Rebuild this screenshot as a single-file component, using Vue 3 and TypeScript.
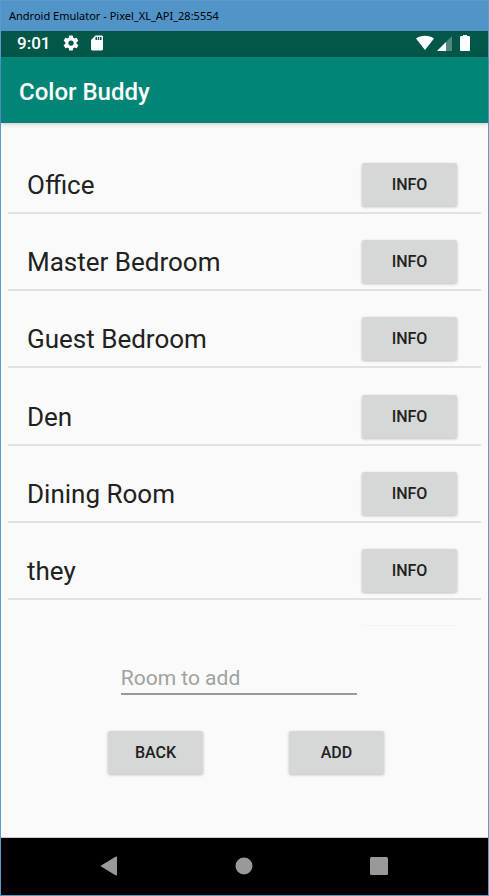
<script setup lang="ts">
import { ref } from 'vue'

interface Room {
  id: number
  name: string
}

const rooms = ref<Room[]>(
  ['Office', 'Master Bedroom', 'Guest Bedroom', 'Den', 'Dining Room', 'they'].map(
    (name, id) => ({ id, name }),
  ),
)
const newRoom = ref('')

function addRoom(): void {
  const name = newRoom.value.trim()
  if (!name) return
  rooms.value.push({ id: rooms.value.length, name })
  newRoom.value = ''
}
</script>

<template>
  <div class="window">
    <div class="titlebar">Android Emulator - Pixel_XL_API_28:5554</div>

    <div class="status">
      <div class="status-left">
        <span class="clock">9:01</span>
        <svg width="18" height="18" viewBox="0 0 24 24" aria-hidden="true">
          <path
            fill="#fff"
            d="M19.43 12.98c.04-.32.07-.64.07-.98s-.03-.66-.07-.98l2.11-1.65c.19-.15.24-.42.12-.64l-2-3.46c-.12-.22-.39-.3-.61-.22l-2.49 1c-.52-.4-1.08-.73-1.69-.98l-.38-2.65A.49.49 0 0 0 14 2h-4c-.25 0-.46.18-.49.42l-.38 2.65c-.61.25-1.17.59-1.69.98l-2.49-1c-.23-.09-.49 0-.61.22l-2 3.46c-.13.22-.07.49.12.64l2.11 1.65c-.04.32-.07.65-.07.98s.03.66.07.98l-2.11 1.65c-.19.15-.24.42-.12.64l2 3.46c.12.22.39.3.61.22l2.49-1c.52.4 1.08.73 1.69.98l.38 2.65c.03.24.24.42.49.42h4c.25 0 .46-.18.49-.42l.38-2.65c.61-.25 1.17-.59 1.69-.98l2.49 1c.23.09.49 0 .61-.22l2-3.46c.12-.22.07-.49-.12-.64l-2.11-1.65zM12 15.5a3.5 3.5 0 1 1 0-7 3.500 3.500 0 0 1 0 7z"
          />
        </svg>
        <svg width="18" height="18" viewBox="0 0 24 24" aria-hidden="true">
          <path
            fill="#fff"
            d="M18 2h-8L4 8v12c0 1.100.9 2 2 2h12c1.100 0 2-.9 2-2V4c0-1.100-.9-2-2-2zm-6 6h-2V4h2v4zm3 0h-2V4h2v4zm3 0h-2V4h2v4z"
          />
        </svg>
      </div>
      <div class="status-right">
        <svg width="18" height="16" viewBox="0 0 18 16" aria-hidden="true">
          <path fill="#fff" d="M0 3.500C5 -.3 13 -.3 18 3.500L9 15z" />
        </svg>
        <svg width="15" height="16" viewBox="0 0 15 16" aria-hidden="true">
          <path fill="#fff" fill-opacity=".3" d="M15 1v15H0z" />
          <path fill="#fff" d="M9 7v9H0z" />
        </svg>
        <svg class="battery" width="10" height="16" viewBox="0 0 10 16" aria-hidden="true">
          <path fill="#fff" d="M3 0h4v1h2q1 0 1 1v13q0 1-1 1H1q-1 0-1-1V2q0-1 1-1h2z" />
        </svg>
      </div>
    </div>

    <header class="appbar">
      <h1>Color Buddy</h1>
    </header>

    <main class="content">
      <ul class="rooms">
        <li v-for="room in rooms" :key="room.id" class="room">
          <span class="room-name">{{ room.name }}</span>
          <button type="button" class="btn">INFO</button>
        </li>
      </ul>
      <div class="next-edge"></div>

      <form class="entry" @submit.prevent="addRoom">
        <input
          v-model="newRoom"
          class="field"
          type="text"
          placeholder="Room to add"
          aria-label="Room to add"
        />
        <div class="actions">
          <button type="button" class="btn">BACK</button>
          <button type="submit" class="btn">ADD</button>
        </div>
      </form>
    </main>

    <nav class="navbar">
      <button type="button" class="nav-btn" aria-label="Back">
        <svg width="20" height="20" viewBox="0 0 20 20">
          <path fill="#999" d="M2.500 9.200L16.500.8Q18 0 18 1.500v17Q18 20 16.500 19.200L2.500 10.800Q1 10 2.500 9.200z" />
        </svg>
      </button>
      <button type="button" class="nav-btn" aria-label="Home">
        <svg width="20" height="20" viewBox="0 0 20 20">
          <circle cx="10" cy="10" r="8.500" fill="#999" />
        </svg>
      </button>
      <button type="button" class="nav-btn" aria-label="Overview">
        <svg width="20" height="20" viewBox="0 0 20 20">
          <rect x="1" y="1" width="18" height="18" rx="1.500" fill="#999" />
        </svg>
      </button>
    </nav>
  </div>
</template>

<style>
body {
  margin: 0;
}
</style>

<style scoped>
* {
  box-sizing: border-box;
}

.window {
  display: flex;
  flex-direction: column;
  min-height: 100vh;
  border: 1px solid #5a9bcb;
  background: #fafafa;
  color: #212121;
  font-family: Roboto, 'Liberation Sans', sans-serif;
}

.titlebar {
  height: 30px;
  padding-left: 8px;
  background: #5194c8;
  color: #000;
  font: 11px/30px 'Noto Sans', 'Open Sans', sans-serif;
  white-space: nowrap;
}

.status {
  display: flex;
  justify-content: space-between;
  height: 26px;
  padding: 0 18px 2px 16px;
  background: #025749;
}

.status-left,
.status-right {
  display: flex;
  align-items: center;
}

.status-left {
  gap: 8px;
}

.clock {
  margin-right: 4px;
  color: #fff;
  font-size: 17px;
  font-weight: 500;
}

.status-right {
  gap: 3px;
}

.battery {
  margin-left: 5px;
}

.appbar {
  display: flex;
  align-items: center;
  height: 66px;
  padding: 3px 18px 0;
  background: #028576;
  box-shadow: 0 1px 4px rgba(0, 0, 0, 0.2);
}

h1 {
  margin: 0;
  color: #fff;
  font-size: 24px;
  font-weight: 500;
}

.content {
  display: flex;
  flex: 1;
  flex-direction: column;
  padding: 14px 7px 63px;
}

.rooms {
  display: grid;
  flex: 1;
  grid-auto-rows: 1fr;
  margin: 0;
  padding: 0;
  list-style: none;
}

.room {
  display: flex;
  align-items: flex-end;
  justify-content: space-between;
  padding: 0 24px 6px 19px;
  border-bottom: 2px solid #e1e1e1;
}

.room-name {
  font-size: 26px;
  line-height: 42px;
}

.btn {
  width: 95px;
  height: 43px;
  padding: 0;
  border: 0;
  border-radius: 2px;
  background: #d6d7d7;
  box-shadow: 0 1px 3px rgba(0, 0, 0, 0.25);
  color: #212121;
  font: 500 16px/43px Roboto, 'Liberation Sans', sans-serif;
}

.next-edge {
  align-self: flex-end;
  width: 93px;
  height: 1px;
  margin: 25px 25px 0 0;
  background: #f4f4f4;
}

.entry {
  display: flex;
  flex-direction: column;
  align-items: center;
  padding-top: 34px;
}

.field {
  width: 50%;
  height: 35px;
  margin-right: 11px;
  padding: 2px 0 0;
  border: 0;
  border-bottom: 2px solid #999;
  outline: 0;
  background: transparent;
  color: #212121;
  font: 21px Roboto, 'Liberation Sans', sans-serif;
}

.field::placeholder {
  color: #a1a1a1;
  opacity: 1;
}

.actions {
  display: flex;
  gap: 86px;
  margin-top: 36px;
  padding-left: 3px;
}

.navbar {
  display: flex;
  align-items: center;
  justify-content: center;
  gap: 115px;
  height: 58px;
  padding: 0 2px 2px 0;
  border-top: 1px solid #ccc;
  background: #000;
}

.nav-btn {
  display: flex;
  padding: 0;
  border: 0;
  background: none;
}
</style>
